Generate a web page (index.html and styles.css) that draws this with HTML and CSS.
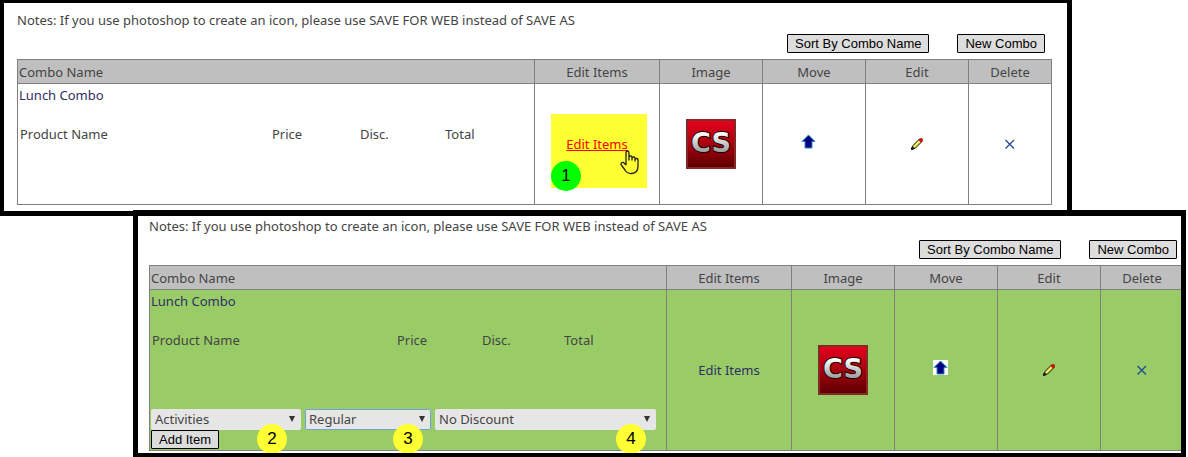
FILE: index.html
```html
<!DOCTYPE html>
<html lang="en">
<head>
    <meta charset="UTF-8">
    <meta name="viewport" content="width=device-width, initial-scale=1.0">
    <title>Combos</title>
    <link rel="stylesheet" href="styles.css">
</head>
<body>
    <!-- Shared icons -->
    <svg class="defs" width="0" height="0" aria-hidden="true">
        <defs>
            <linearGradient id="red" x1="0" y1="0" x2="0" y2="1">
                <stop offset="0" stop-color="#e8001c"/>
                <stop offset="0.5" stop-color="#a8000f"/>
                <stop offset="1" stop-color="#5a0000"/>
            </linearGradient>
            <linearGradient id="steel" x1="0" y1="0" x2="0" y2="1">
                <stop offset="0.2" stop-color="#ffffff"/>
                <stop offset="0.9" stop-color="#8c8c8c"/>
            </linearGradient>
        </defs>
        <symbol id="up" viewBox="0 0 15 15">
            <rect width="15" height="15" fill="#fff"/>
            <path d="M7.5 1L14 7.500H11V14H4V7.500H1Z" fill="#000080" stroke="#2b8cc4" stroke-width="1"/>
        </symbol>
        <symbol id="pencil" viewBox="0 0 12 12">
            <path d="M1 11L2 7.500L8.500 1L11 1L11 3.500L4.500 10Z" fill="#f0e040" stroke="#111" stroke-width="1"/>
            <path d="M3 8.500L8.500 3" stroke="#fff7c0" stroke-width="1"/>
            <path d="M9 0.500H11.500V3L10 4.500L7.500 2Z" fill="#e00000"/>
            <path d="M0 12V9.500L2 8.500L3.500 10L2 12Z" fill="#222"/>
        </symbol>
        <symbol id="cross" viewBox="0 0 10 10">
            <path d="M0.500 1L9 9.500M9 1L0.500 9.500" stroke="#1c4494" stroke-width="1.200" fill="none"/>
        </symbol>
    </svg>

    <section class="panel panel-list">
        <p class="notes">Notes: If you use photoshop to create an icon, please use SAVE FOR WEB instead of SAVE AS</p>
        <div class="toolbar">
            <button type="button">Sort By Combo Name</button>
            <button type="button">New Combo</button>
        </div>
        <table class="combos">
            <colgroup>
                <col><col class="col-items"><col class="col-icon"><col class="col-icon"><col class="col-icon"><col class="col-delete">
            </colgroup>
            <thead>
                <tr><th>Combo Name</th><th>Edit Items</th><th>Image</th><th>Move</th><th>Edit</th><th>Delete</th></tr>
            </thead>
            <tbody>
                <tr>
                    <td>
                        <a href="#" class="name">Lunch Combo</a>
                        <div class="products">
                            <span>Product Name</span><span>Price</span><span>Disc.</span><span>Total</span>
                        </div>
                    </td>
                    <td>
                        <div class="callout">
                            <a href="#" class="active">Edit Items</a>
                            <span class="badge badge-green">1</span>
                            <svg class="hand" width="19" height="25" viewBox="0 0 19 25">
                                <path d="M6 15V3Q6 1 7.500 1T9 3V10V7Q9 6 10.500 6T12 7.500V10V8Q12 7 13.500 7T15 8.500V11V9.500Q15 8.500 16.500 8.500T18 10V16Q18 23.500 11 23.500Q7 23.500 5 20L1 14.500Q1 12 3.500 12.500L6 15" fill="none" stroke="#222" stroke-width="1.300" stroke-linejoin="round"/>
                            </svg>
                        </div>
                    </td>
                    <td>
                        <svg width="50" height="50" viewBox="0 0 50 50">
                            <rect x="1" y="1" width="48" height="48" fill="url(#red)" stroke="#842828" stroke-width="2"/>
                            <text x="25" y="33" class="logo-text">CS</text>
                        </svg>
                    </td>
                    <td><svg class="up" width="15" height="15"><use href="#up"/></svg></td>
                    <td><svg width="12" height="12"><use href="#pencil"/></svg></td>
                    <td><svg width="10" height="10"><use href="#cross"/></svg></td>
                </tr>
            </tbody>
        </table>
    </section>

    <section class="panel panel-edit">
        <p class="notes">Notes: If you use photoshop to create an icon, please use SAVE FOR WEB instead of SAVE AS</p>
        <div class="toolbar">
            <button type="button">Sort By Combo Name</button>
            <button type="button">New Combo</button>
        </div>
        <table class="combos">
            <colgroup>
                <col><col class="col-items"><col class="col-icon"><col class="col-icon"><col class="col-icon"><col class="col-delete">
            </colgroup>
            <thead>
                <tr><th>Combo Name</th><th>Edit Items</th><th>Image</th><th>Move</th><th>Edit</th><th>Delete</th></tr>
            </thead>
            <tbody>
                <tr>
                    <td>
                        <a href="#" class="name">Lunch Combo</a>
                        <div class="products">
                            <span>Product Name</span><span>Price</span><span>Disc.</span><span>Total</span>
                        </div>
                        <div class="pickers">
                            <div class="picker picker-product">
                                <select aria-label="Product"><option>Activities</option></select>
                                <span class="badge">2</span>
                            </div>
                            <div class="picker picker-price">
                                <select class="focused" aria-label="Price"><option>Regular</option></select>
                                <span class="badge">3</span>
                            </div>
                            <div class="picker picker-discount">
                                <select aria-label="Discount"><option>No Discount</option></select>
                                <span class="badge">4</span>
                            </div>
                        </div>
                        <button type="button">Add Item</button>
                    </td>
                    <td><a href="#">Edit Items</a></td>
                    <td>
                        <svg width="50" height="50" viewBox="0 0 50 50">
                            <rect x="1" y="1" width="48" height="48" fill="url(#red)" stroke="#842828" stroke-width="2"/>
                            <text x="25" y="33" class="logo-text">CS</text>
                        </svg>
                    </td>
                    <td><svg class="up" width="15" height="15"><use href="#up"/></svg></td>
                    <td><svg width="12" height="12"><use href="#pencil"/></svg></td>
                    <td><svg width="10" height="10"><use href="#cross"/></svg></td>
                </tr>
            </tbody>
        </table>
    </section>
</body>
</html>
```

FILE: styles.css
```css
* {
    box-sizing: border-box;
}

body {
    margin: 0;
    background: #fff;
    color: #444;
    font-family: "Noto Sans", "Open Sans", sans-serif;
    font-size: 13px;
    line-height: 21px;
}

.defs {
    position: absolute;
}

.logo-text {
    font-family: "DejaVu Sans", sans-serif;
    font-size: 27px;
    font-weight: bold;
    text-anchor: middle;
    fill: url(#steel);
    stroke: #1a0000;
    stroke-width: 2px;
    paint-order: stroke;
}

.panel {
    border: 5px solid #000;
    background: #fff;
    overflow: hidden;
}

.panel-list {
    margin-right: 116px;
    padding: 7px 15px 6px 13px;
    border-width: 3px 5px 5px 4px;
}

.panel-edit {
    position: relative;
    margin: -6px 2px 0 133px;
    padding: 0 0 2px 11px;
    border-width: 6px 5px 4px 5px;
}

/* the edit table runs under the right frame */
.panel-edit .toolbar,
.panel-edit .combos {
    width: calc(100% + 3px);
}

.notes {
    margin: 0 0 3px;
}

.toolbar {
    display: flex;
    justify-content: flex-end;
    gap: 28px;
    margin-bottom: 6px;
    padding-right: 7px;
}

button {
    height: 19px;
    padding: 0 7px;
    border: 1px solid #000;
    border-radius: 1px;
    background: #ddd;
    color: #000;
    font-family: "Liberation Sans", Arial, sans-serif;
    font-size: 13px;
    line-height: 17px;
}

.combos {
    width: 100%;
    table-layout: fixed;
    border-collapse: collapse;
}

.col-items {
    width: 125px;
}

.col-icon {
    width: 103px;
}

.col-delete {
    width: 83px;
}

th,
td {
    border: 1px solid #808080;
    padding: 0 1px;
    text-align: center;
    vertical-align: middle;
}

th {
    height: 24px;
    padding-top: 1px;
    background: #bfbfbf;
    font-weight: normal;
}

td {
    height: 121px;
}

th:first-child,
td:first-child {
    text-align: left;
}

td:first-child {
    padding-top: 1px;
    vertical-align: top;
}

.panel-edit td {
    height: 161px;
    background: #9c6;
}

td svg {
    display: block;
    margin: 0 auto;
}

td svg.up {
    position: relative;
    left: -6px;
    top: -3px;
}

a {
    color: #2f2f66;
    text-decoration: none;
}

a.active {
    position: relative;
    color: #f00;
    text-decoration: underline;
}

.name {
    display: block;
    margin-bottom: 18px;
}

.products {
    display: grid;
    grid-template-columns: 252px 88px 85px 1fr;
    padding-left: 1px;
}

.panel-edit .products {
    grid-template-columns: 245px 85px 82px 1fr;
    margin-bottom: 58px;
}

.pickers {
    display: flex;
    gap: 4px;
}

.picker {
    position: relative;
}

.picker-product {
    width: 150px;
}

.picker-price {
    width: 126px;
}

.picker-discount {
    width: 221px;
}

.picker::after {
    content: "";
    position: absolute;
    top: 7px;
    right: 6px;
    border: 3px solid transparent;
    border-top: 6px solid #333;
    border-bottom: 0;
    pointer-events: none;
}

select {
    display: block;
    width: 100%;
    height: 21px;
    padding: 0 4px;
    border: 0;
    border-radius: 2px;
    appearance: none;
    background: #e6e6e6;
    color: #444;
    font: inherit;
}

select.focused {
    box-shadow: inset 0 0 0 1px #6fa3d8;
}

.pickers + button {
    display: block;
}

.badge {
    position: absolute;
    z-index: 1;
    top: 15px;
    right: 14px;
    width: 30px;
    height: 30px;
    border-radius: 50%;
    background: #ff3;
    color: #000;
    font-family: "Liberation Sans", Arial, sans-serif;
    font-size: 17px;
    line-height: 30px;
    text-align: center;
}

.picker-price .badge {
    right: 8px;
}

.picker-discount .badge {
    right: 10px;
}

.callout {
    position: relative;
}

/* yellow marker behind the link */
.callout::before {
    content: "";
    position: absolute;
    top: -20px;
    left: 15px;
    width: 96px;
    height: 74px;
    background: #ff3;
}

.badge-green {
    top: 27px;
    left: 15px;
    background: #0f0;
}

td svg.hand {
    position: absolute;
    top: 16px;
    left: 84px;
}
```
